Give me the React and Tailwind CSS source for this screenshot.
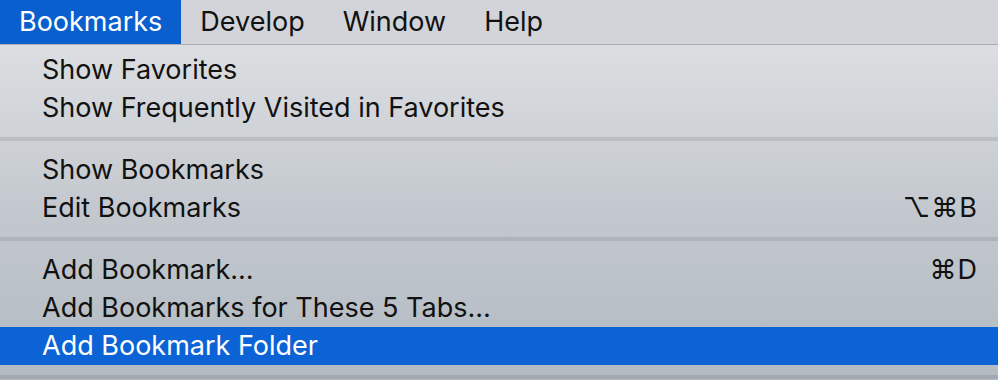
import React from "react";

const font = { fontFamily: 'Inter, "DejaVu Sans", sans-serif' };

function Row({ label, shortcut, active }) {
  return (
    <div
      className={
        "flex h-[38px] items-center justify-between pl-[42px] pr-[20px] text-[27px] leading-[38px] " +
        (active ? "bg-[#0b63d5] text-white" : "text-[#111111]")
      }
    >
      <span>{label}</span>
      {shortcut ? <span className="tracking-[1px]">{shortcut}</span> : null}
    </div>
  );
}

function Sep() {
  return <div className="my-[10px] h-[4px] bg-black/[0.09]" />;
}

export default function App() {
  return (
    <div className="h-[380px] w-[998px] overflow-hidden" style={font}>
      <div className="flex h-[44px] items-stretch bg-[#d2d4d9] text-[27px] text-[#111111]">
        <div className="flex items-center bg-[#0a5fcf] px-[19px] text-white">Bookmarks</div>
        <div className="flex items-center px-[19px]">Develop</div>
        <div className="flex items-center px-[19px]">Window</div>
        <div className="flex items-center px-[19px]">Help</div>
      </div>
      <div className="h-[1px] bg-[#a9acb2]" />
      <div className="h-[335px] bg-linear-to-b from-[#dcdee1] via-[#c3c8ce] to-[#b2bac2] pt-[6px]">
        <Row label="Show Favorites" />
        <Row label="Show Frequently Visited in Favorites" />
        <Sep />
        <Row label="Show Bookmarks" />
        <Row label="Edit Bookmarks" shortcut="⌥⌘B" />
        <Sep />
        <Row label="Add Bookmark…" shortcut="⌘D" />
        <Row label="Add Bookmarks for These 5 Tabs…" />
        <Row label="Add Bookmark Folder" active />
        <Sep />
      </div>
    </div>
  );
}
